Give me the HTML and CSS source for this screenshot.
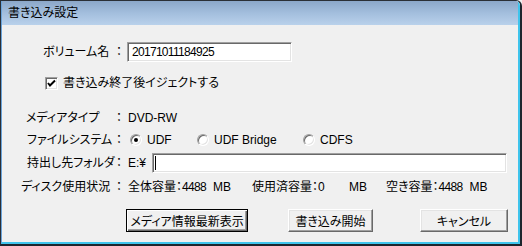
FILE: index.html
```html
<!DOCTYPE html>
<html lang="ja">
<head>
  <meta charset="UTF-8">
  <title>書き込み設定</title>
  <link rel="stylesheet" href="styles.css">
</head>
<body>
  <div class="window">
    <div class="frame">
      <div class="titlebar">書き込み設定</div>

      <div class="content">
        <div class="row vol-row">
          <span class="label pad-vol">ボリューム名</span>
          <span class="colon">：</span>
          <div class="textbox vol-box"><span class="num">20171011184925</span></div>
        </div>

        <div class="row check-row">
          <span class="checkbox">
            <svg width="13" height="13" viewBox="0 0 13 13">
              <polyline points="3,6 5,8.5 10,3.5" fill="none" stroke="#000" stroke-width="2"/>
            </svg>
          </span>
          <span>書き込み終了後イジェクトする</span>
        </div>

        <div class="row media-row">
          <span class="label pad-media">メディアタイプ</span>
          <span class="colon">：</span>
          <span class="value">DVD-RW</span>
        </div>

        <div class="row fs-row">
          <span class="label pad-fs">ファイルシステム</span>
          <span class="colon">：</span>
          <div class="radios">
            <label class="radio-opt opt-udf"><span class="radio checked"></span>UDF</label>
            <label class="radio-opt opt-bridge"><span class="radio"></span>UDF Bridge</label>
            <label class="radio-opt"><span class="radio"></span>CDFS</label>
          </div>
        </div>

        <div class="row folder-row">
          <span class="label pad-folder">持出し先フォルダ</span>
          <span class="colon">：</span>
          <span class="value drive">E:¥</span>
          <div class="textbox folder-box"><span class="caret"></span></div>
        </div>

        <div class="row disk-row">
          <span class="label pad-disk">ディスク使用状況</span>
          <span class="colon">：</span>
          <div class="caps">
            <span class="cap cap-total"><span class="cap-name">全体容量：</span><span class="cap-num num">4488</span>MB</span>
            <span class="cap cap-used"><span class="cap-name">使用済容量：</span><span class="cap-num num">0</span>MB</span>
            <span class="cap"><span class="cap-name">空き容量：</span><span class="cap-num num">4488</span>MB</span>
          </div>
        </div>

        <div class="btn-row">
          <button class="btn btn-default btn-refresh">メディア情報最新表示</button>
          <button class="btn btn-start">書き込み開始</button>
          <button class="btn btn-cancel">キャンセル</button>
        </div>
      </div>
    </div>
  </div>
</body>
</html>
```

FILE: styles.css
```css
* {
  margin: 0;
  padding: 0;
  box-sizing: border-box;
}

body {
  font-family: "Liberation Sans", "Noto Sans CJK JP", sans-serif;
  font-size: 12px;
  font-feature-settings: "palt";
  color: #000;
  background: #f0f0f0;
}

.window {
  width: 522px;
  height: 246px;
  border-top: 1px solid #2a2f36;
  border-left: 1px solid #2a2f36;
  border-right: 2px solid #1e252d;
  border-bottom: 2px solid #1e252d;
  border-top-right-radius: 6px;
  overflow: hidden;
}

.frame {
  height: 100%;
  display: flex;
  flex-direction: column;
  border-left: 1px solid #6aa4da;
  border-right: 2px solid #3fc4ec;
  border-bottom: 2px solid #3fc4ec;
  background: #f0f0f0;
}

.titlebar {
  height: 24px;
  line-height: 25px;
  padding-left: 6px;
  background: linear-gradient(to bottom, #8ba7c9 0%, #a3bedd 50%, #b9d1eb 100%);
}

.content {
  flex: 1;
  display: flex;
  flex-direction: column;
}

.row {
  display: flex;
  align-items: center;
  height: 16px;
  line-height: 16px;
  white-space: nowrap;
}

.label {
  width: 111px;
}

.pad-vol { padding-left: 41px; }
.pad-media { padding-left: 24px; }
.pad-fs { padding-left: 25px; }
.pad-folder { padding-left: 25px; }
.pad-disk { padding-left: 19px; }

.colon {
  width: 12px;
  text-align: center;
}

.value {
  margin-left: 3px;
}

.num {
  letter-spacing: -0.7px;
}

/* sunken edit box */
.textbox {
  height: 20px;
  background: #fff;
  border: 1px solid;
  border-color: #a0a0a0 #fff #fff #a0a0a0;
  box-shadow: inset 1px 1px #696969, inset -1px -1px #e3e3e3;
  display: flex;
  align-items: center;
  padding-left: 4px;
}

.vol-row {
  height: 20px;
  margin-top: 17px;
}

.vol-box {
  width: 165px;
  margin-left: 2px;
}

.check-row {
  margin-top: 13px;
  padding-left: 43px;
}

.checkbox {
  width: 13px;
  height: 13px;
  margin-right: 5px;
  background: #fff;
  border: 1px solid;
  border-color: #a0a0a0 #fff #fff #a0a0a0;
  box-shadow: inset 1px 1px #696969, inset -1px -1px #e3e3e3;
  display: flex;
}

.checkbox svg {
  margin: -1px;
}

.media-row {
  margin-top: 19px;
}

.fs-row {
  margin-top: 6px;
}

.radios {
  display: flex;
  margin-left: 5px;
}

.radio-opt {
  display: flex;
  align-items: center;
}

.opt-udf { width: 67px; }
.opt-bridge { width: 106px; }

.radio {
  width: 12px;
  height: 12px;
  margin-right: 5px;
  border-radius: 50%;
  background: #fff;
  border: 1px solid;
  border-color: #a0a0a0 #fff #fff #a0a0a0;
  box-shadow: inset 1px 1px #696969, inset -1px -1px #e3e3e3;
  display: flex;
  align-items: center;
  justify-content: center;
}

.radio.checked::after {
  content: "";
  width: 4px;
  height: 4px;
  border-radius: 50%;
  background: #000;
}

.folder-row {
  height: 20px;
  margin-top: 5px;
}

.drive {
  width: 24px;
}

.folder-box {
  width: 355px;
  padding-left: 2px;
}

.caret {
  width: 1px;
  height: 14px;
  background: #000;
}

.disk-row {
  margin-top: 6px;
}

.caps {
  display: flex;
  margin-left: 3px;
}

.cap {
  display: flex;
}

.cap-total { width: 124px; }
.cap-used { width: 134px; }

.cap-num {
  width: 31px;
}

.btn-row {
  display: flex;
  margin-top: 14px;
  padding-left: 124px;
}

.btn {
  height: 23px;
  font-family: inherit;
  font-size: 12px;
  font-feature-settings: "palt";
  color: #000;
  background: #f0f0f0;
  border: 1px solid;
  border-color: #fff #696969 #696969 #fff;
  box-shadow: inset -1px -1px #a0a0a0, inset 1px 1px #e3e3e3;
}

.btn-default {
  border-color: #000;
  box-shadow: inset 1px 1px #fff, inset -1px -1px #696969, inset -2px -2px #a0a0a0;
}

.btn-refresh { width: 122px; }

.btn-start {
  width: 85px;
  margin-left: 40px;
}

.btn-cancel {
  width: 88px;
  margin-left: 47px;
}
```
